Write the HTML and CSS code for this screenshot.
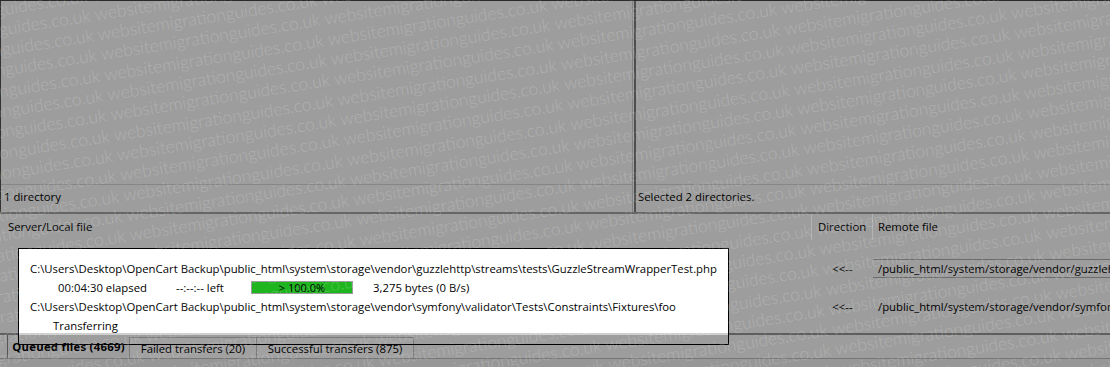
FILE: index.html
```html
<!DOCTYPE html>
<html lang="en">
<head>
<meta charset="utf-8">
<title>FileZilla queue</title>
<link rel="stylesheet" href="styles.css">
</head>
<body>
<div class="screen">
  <div class="panes">
    <section class="pane pane-left">
      <div class="pane-list"></div>
      <div class="pane-status">1 directory</div>
    </section>
    <div class="pane-divider"></div>
    <section class="pane pane-right">
      <div class="pane-list"></div>
      <div class="pane-status">Selected 2 directories.</div>
    </section>
  </div>

  <div class="queue">
    <div class="queue-head">
      <div class="col col-local">Server/Local file</div>
      <div class="col col-dir">Direction</div>
      <div class="col col-remote">Remote file</div>
    </div>
    <div class="queue-list">
      <div class="highlight"></div>
      <div class="qrow">
        <div class="cell cell-local">C:\Users\Desktop\OpenCart Backup\public_html\system\storage\vendor\guzzlehttp\streams\tests\GuzzleStreamWrapperTest.php</div>
        <div class="cell cell-dir">&lt;&lt;--</div>
        <div class="cell cell-remote"><span class="focus">/public_html/system/storage/vendor/guzzlehttp/streams/tests/GuzzleStreamWrapperTest.php</span></div>
      </div>
      <div class="qrow">
        <div class="cell cell-local cell-progress">
          <span class="elapsed">00:04:30 elapsed</span>
          <span class="eta">--:--:-- left</span>
          <span class="bar">&gt; 100.0%</span>
          <span class="bytes">3,275 bytes (0 B/s)</span>
        </div>
        <div class="cell cell-dir"></div>
        <div class="cell cell-remote"></div>
      </div>
      <div class="qrow">
        <div class="cell cell-local">C:\Users\Desktop\OpenCart Backup\public_html\system\storage\vendor\symfony\validator\Tests\Constraints\Fixtures\foo</div>
        <div class="cell cell-dir">&lt;&lt;--</div>
        <div class="cell cell-remote"><span class="plain">/public_html/system/storage/vendor/symfony/validator/Tests/Constraints/Fixtures/foo</span></div>
      </div>
      <div class="qrow">
        <div class="cell cell-local cell-state">Transferring</div>
        <div class="cell cell-dir"></div>
        <div class="cell cell-remote"></div>
      </div>
    </div>
    <div class="tabs">
      <div class="tab tab-active">Queued files (4669)</div>
      <div class="tab tab-failed">Failed transfers (20)</div>
      <div class="tab tab-ok">Successful transfers (875)</div>
    </div>
    <div class="statusbar"></div>
  </div>

  <div class="watermark" aria-hidden="true">
    <p>
websitemigrationguides.co.uk websitemigrationguides.co.uk websitemigrationguides.co.uk websitemigrationguides.co.uk websitemigrationguides.co.uk websitemigrationguides.co.uk websitemigrationguides.co.uk
websitemigrationguides.co.uk websitemigrationguides.co.uk websitemigrationguides.co.uk websitemigrationguides.co.uk websitemigrationguides.co.uk websitemigrationguides.co.uk websitemigrationguides.co.uk
websitemigrationguides.co.uk websitemigrationguides.co.uk websitemigrationguides.co.uk websitemigrationguides.co.uk websitemigrationguides.co.uk websitemigrationguides.co.uk websitemigrationguides.co.uk
websitemigrationguides.co.uk websitemigrationguides.co.uk websitemigrationguides.co.uk websitemigrationguides.co.uk websitemigrationguides.co.uk websitemigrationguides.co.uk websitemigrationguides.co.uk
websitemigrationguides.co.uk websitemigrationguides.co.uk websitemigrationguides.co.uk websitemigrationguides.co.uk websitemigrationguides.co.uk websitemigrationguides.co.uk websitemigrationguides.co.uk
websitemigrationguides.co.uk websitemigrationguides.co.uk websitemigrationguides.co.uk websitemigrationguides.co.uk websitemigrationguides.co.uk websitemigrationguides.co.uk websitemigrationguides.co.uk
websitemigrationguides.co.uk websitemigrationguides.co.uk websitemigrationguides.co.uk websitemigrationguides.co.uk websitemigrationguides.co.uk websitemigrationguides.co.uk websitemigrationguides.co.uk
websitemigrationguides.co.uk websitemigrationguides.co.uk websitemigrationguides.co.uk websitemigrationguides.co.uk websitemigrationguides.co.uk websitemigrationguides.co.uk websitemigrationguides.co.uk
websitemigrationguides.co.uk websitemigrationguides.co.uk websitemigrationguides.co.uk websitemigrationguides.co.uk websitemigrationguides.co.uk websitemigrationguides.co.uk websitemigrationguides.co.uk
websitemigrationguides.co.uk websitemigrationguides.co.uk websitemigrationguides.co.uk websitemigrationguides.co.uk websitemigrationguides.co.uk websitemigrationguides.co.uk websitemigrationguides.co.uk
websitemigrationguides.co.uk websitemigrationguides.co.uk websitemigrationguides.co.uk websitemigrationguides.co.uk websitemigrationguides.co.uk websitemigrationguides.co.uk websitemigrationguides.co.uk
websitemigrationguides.co.uk websitemigrationguides.co.uk websitemigrationguides.co.uk websitemigrationguides.co.uk websitemigrationguides.co.uk websitemigrationguides.co.uk websitemigrationguides.co.uk
websitemigrationguides.co.uk websitemigrationguides.co.uk websitemigrationguides.co.uk websitemigrationguides.co.uk websitemigrationguides.co.uk websitemigrationguides.co.uk websitemigrationguides.co.uk
websitemigrationguides.co.uk websitemigrationguides.co.uk websitemigrationguides.co.uk websitemigrationguides.co.uk websitemigrationguides.co.uk websitemigrationguides.co.uk websitemigrationguides.co.uk
websitemigrationguides.co.uk websitemigrationguides.co.uk websitemigrationguides.co.uk websitemigrationguides.co.uk websitemigrationguides.co.uk websitemigrationguides.co.uk websitemigrationguides.co.uk
websitemigrationguides.co.uk websitemigrationguides.co.uk websitemigrationguides.co.uk websitemigrationguides.co.uk websitemigrationguides.co.uk websitemigrationguides.co.uk websitemigrationguides.co.uk
websitemigrationguides.co.uk websitemigrationguides.co.uk websitemigrationguides.co.uk websitemigrationguides.co.uk websitemigrationguides.co.uk websitemigrationguides.co.uk websitemigrationguides.co.uk
websitemigrationguides.co.uk websitemigrationguides.co.uk websitemigrationguides.co.uk websitemigrationguides.co.uk websitemigrationguides.co.uk websitemigrationguides.co.uk websitemigrationguides.co.uk
websitemigrationguides.co.uk websitemigrationguides.co.uk websitemigrationguides.co.uk websitemigrationguides.co.uk websitemigrationguides.co.uk websitemigrationguides.co.uk websitemigrationguides.co.uk
websitemigrationguides.co.uk websitemigrationguides.co.uk websitemigrationguides.co.uk websitemigrationguides.co.uk websitemigrationguides.co.uk websitemigrationguides.co.uk websitemigrationguides.co.uk
websitemigrationguides.co.uk websitemigrationguides.co.uk websitemigrationguides.co.uk websitemigrationguides.co.uk websitemigrationguides.co.uk websitemigrationguides.co.uk websitemigrationguides.co.uk
websitemigrationguides.co.uk websitemigrationguides.co.uk websitemigrationguides.co.uk websitemigrationguides.co.uk websitemigrationguides.co.uk websitemigrationguides.co.uk websitemigrationguides.co.uk
websitemigrationguides.co.uk websitemigrationguides.co.uk websitemigrationguides.co.uk websitemigrationguides.co.uk websitemigrationguides.co.uk websitemigrationguides.co.uk websitemigrationguides.co.uk
websitemigrationguides.co.uk websitemigrationguides.co.uk websitemigrationguides.co.uk websitemigrationguides.co.uk websitemigrationguides.co.uk websitemigrationguides.co.uk websitemigrationguides.co.uk
websitemigrationguides.co.uk websitemigrationguides.co.uk websitemigrationguides.co.uk websitemigrationguides.co.uk websitemigrationguides.co.uk websitemigrationguides.co.uk websitemigrationguides.co.uk
websitemigrationguides.co.uk websitemigrationguides.co.uk websitemigrationguides.co.uk websitemigrationguides.co.uk websitemigrationguides.co.uk websitemigrationguides.co.uk websitemigrationguides.co.uk
websitemigrationguides.co.uk websitemigrationguides.co.uk websitemigrationguides.co.uk websitemigrationguides.co.uk websitemigrationguides.co.uk websitemigrationguides.co.uk websitemigrationguides.co.uk
websitemigrationguides.co.uk websitemigrationguides.co.uk websitemigrationguides.co.uk websitemigrationguides.co.uk websitemigrationguides.co.uk websitemigrationguides.co.uk websitemigrationguides.co.uk
websitemigrationguides.co.uk websitemigrationguides.co.uk websitemigrationguides.co.uk websitemigrationguides.co.uk websitemigrationguides.co.uk websitemigrationguides.co.uk websitemigrationguides.co.uk
websitemigrationguides.co.uk websitemigrationguides.co.uk websitemigrationguides.co.uk websitemigrationguides.co.uk websitemigrationguides.co.uk websitemigrationguides.co.uk websitemigrationguides.co.uk
    </p>
  </div>
</div>
</body>
</html>
```

FILE: styles.css
```css
* {
  box-sizing: border-box;
  margin: 0;
  padding: 0;
}

body {
  width: 1110px;
  height: 367px;
  overflow: hidden;
  background: #9d9d9d;
  font-family: "Open Sans", "Noto Sans", sans-serif;
  font-size: 11.35px;
  color: #000;
}

.screen {
  position: relative;
  width: 1110px;
  height: 367px;
  overflow: hidden;
}

/* ---------- file panes ---------- */
.panes {
  display: flex;
  height: 214px;
  border-top: 1px solid #2a2a2a;
  border-bottom: 2px solid #666;
}

.pane {
  display: flex;
  flex-direction: column;
}

.pane-left {
  width: 632px;
  border-left: 1px solid #333;
}

.pane-right {
  flex: 1;
}

.pane-divider {
  width: 4px;
  border-left: 1px solid #828282;
  border-right: 2px solid #4e4e4e;
}

.pane-list {
  flex: 1;
}

.pane-status {
  height: 28px;
  border-top: 1px solid #868686;
  line-height: 24px;
  padding-left: 3px;
  white-space: nowrap;
}

.pane-right .pane-status {
  padding-left: 2px;
}

/* ---------- queue ---------- */
.queue-head {
  display: flex;
  height: 26px;
  line-height: 25px;
  white-space: nowrap;
}

.col-local {
  width: 812px;
  padding-left: 8px;
  border-right: 1px solid #b3b3b3;
}

.col-dir {
  width: 61px;
  padding-left: 6px;
  border-right: 1px solid #b3b3b3;
}

.col-remote {
  flex: 1;
  padding-left: 5px;
}

.queue-list {
  position: relative;
  height: 95px;
  padding-top: 19px;
  border-bottom: 2px solid #5e5e5e;
}

.highlight {
  position: absolute;
  left: 18px;
  top: 8px;
  width: 711px;
  height: 97px;
  border: 1px solid #000;
  background:
    linear-gradient(#fff, #fff) 0 0 / 100% 84px no-repeat,
    linear-gradient(#cfcfcf, #cfcfcf) 0 84px / 100% 2px no-repeat;
  z-index: 1;
}

.qrow {
  position: relative;
  z-index: 2;
  display: flex;
  height: 19px;
  line-height: 19px;
  white-space: nowrap;
}

.cell-local {
  width: 812px;
  padding-left: 30px;
}

.cell-dir {
  width: 61px;
  text-align: center;
}

.cell-remote {
  flex: 1;
  overflow: hidden;
}

.focus {
  display: block;
  margin-left: -1px;
  height: 19px;
  border: 1px solid #6c6c6c;
  border-right: none;
  padding-left: 5px;
  line-height: 17px;
}

.plain {
  display: block;
  padding-left: 5px;
}

.cell-progress {
  display: flex;
  align-items: center;
  padding-left: 58px;
}

.elapsed {
  width: 118px;
}

.eta {
  width: 75px;
}

.bar {
  width: 102px;
  height: 13px;
  margin-right: 20px;
  background: #1fb51f;
  border: 1px solid #9a9a9a;
  text-align: center;
  line-height: 11px;
  font-size: 11px;
}

.cell-state {
  padding-left: 53px;
}

/* ---------- tabs ---------- */
.tabs {
  display: flex;
  height: 23px;
  padding-left: 7px;
  white-space: nowrap;
}

.tab {
  text-align: center;
  line-height: 21px;
}

.tab-active {
  width: 122px;
  font-weight: 700;
  letter-spacing: 0.25px;
  border-left: 1px solid #555;
  padding-top: 1px;
}

.tab-failed,
.tab-ok {
  margin-top: 2px;
  border: 1px solid #7a7a7a;
  border-bottom: none;
  background: #a1a1a1;
}

.tab-failed {
  width: 128px;
}

.tab-ok {
  width: 157px;
  border-left: none;
}

.statusbar {
  height: 9px;
  border-top: 1px solid #777;
  background: #979797;
}

/* ---------- watermark overlay ---------- */
.watermark {
  position: absolute;
  inset: 0;
  overflow: hidden;
  pointer-events: none;
  z-index: 5;
}

.watermark p {
  position: absolute;
  left: -140px;
  top: -20px;
  width: 1600px;
  transform: rotate(-9deg);
  transform-origin: 0 0;
  font-family: Lato, "Open Sans", sans-serif;
  font-weight: 300;
  font-size: 17.5px;
  line-height: 20.3px;
  color: rgba(255, 255, 255, 0.2);
}
```
